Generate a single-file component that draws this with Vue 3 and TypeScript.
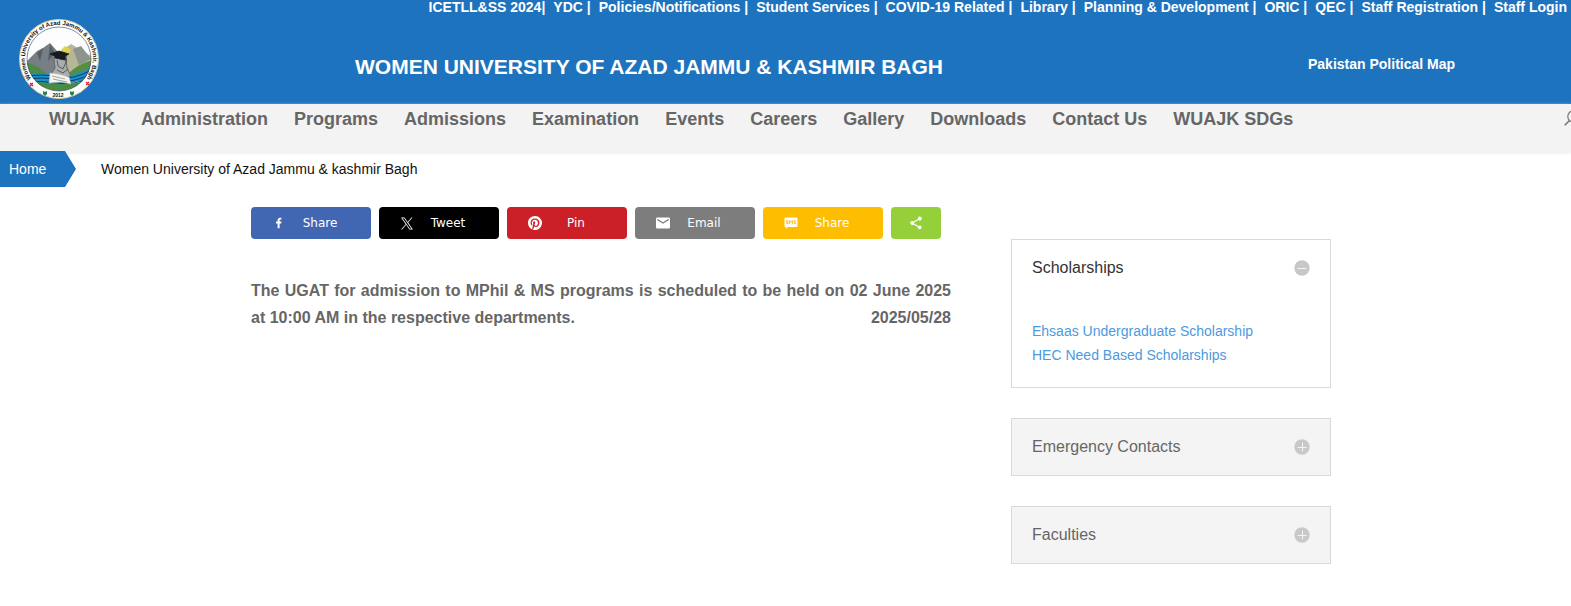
<script setup lang="ts">
import { ref } from 'vue'

const topLinks: string[] = [
  'ICETLL&SS 2024', 'YDC ', 'Policies/Notifications ', 'Student Services ', 'COVID-19 Related ',
  'Library ', 'Planning & Development ', 'ORIC ', 'QEC ', 'Staff Registration ', 'Staff Login',
]
const menu: string[] = [
  'WUAJK', 'Administration', 'Programs', 'Admissions', 'Examination', 'Events',
  'Careers', 'Gallery', 'Downloads', 'Contact Us', 'WUAJK SDGs',
]

interface ShareItem { id: string; label: string }
const shares: ShareItem[] = [
  { id: 'facebook', label: 'Share' },
  { id: 'x', label: 'Tweet' },
  { id: 'pinterest', label: 'Pin' },
  { id: 'email', label: 'Email' },
  { id: 'sms', label: 'Share' },
]

interface Panel { title: string; links: string[] }
const panels: Panel[] = [
  { title: 'Scholarships', links: ['Ehsaas Undergraduate Scholarship', 'HEC Need Based Scholarships'] },
  { title: 'Emergency Contacts', links: [] },
  { title: 'Faculties', links: [] },
]
const openPanel = ref<number>(0)
</script>

<template>
  <div class="page">
    <header class="header">
      <nav class="top-links" aria-label="Quick links">
        <span v-for="(link, i) in topLinks" :key="link" class="top-item"><a href="#">{{ link }}</a><span v-if="i < topLinks.length - 1">|</span></span>
      </nav>
      <div class="brand">
        <a href="#" class="logo" aria-label="University home">
          <svg viewBox="0 0 80 80" width="80" height="80">
            <defs>
              <clipPath id="scene"><circle cx="40" cy="40" r="32" /></clipPath>
              <path id="ring" d="M15.500 63.500 A34 34 0 1 1 64.500 63.500" />
            </defs>
            <circle cx="40" cy="40" r="39.500" fill="#fff" stroke="#d8cda0" stroke-width="1" />
            <g clip-path="url(#scene)">
              <rect width="80" height="80" fill="#fdfdfe" />
              <path d="M42 32 L52 25 L74 38 V58 H36Z" fill="#b5b796" />
              <path d="M42 31 L46 27 L52 31 L49 36Z" fill="#ddd34e" />
              <path d="M54 30 L62 27 L72 40 L60 46Z" fill="#8d948d" />
              <path d="M6 44 L18 32 L24 29 L31 24 L39 33 L46 46 L40 60 H6Z" fill="#777f84" />
              <path d="M18 34 L24 29 L21 42Z M31 25 L36 34 L29 42Z" fill="#545e65" />
              <path d="M6 43 Q20 46 31 58 L29 66 H6Z" fill="#4f8b48" />
              <path d="M74 41 Q59 45 50 54 L53 62 H74Z" fill="#568f43" />
              <path d="M6 56 Q22 53 38 56 T74 47 V61 Q55 62 43 67 T6 63Z" fill="#1a91cb" />
              <path d="M6 58 Q22 54 38 58 T74 50 M6 61 Q22 57 38 61 T74 54 M6 64 Q22 61 38 64 T74 58" fill="none" stroke="#103d64" stroke-width="1" />
              <path d="M4 63 Q21 62 32 65 Q52 66 76 60 V80 H4Z" fill="#498c40" />
              <path d="M35 39 Q40 35 47 39 L48 49 L52 57 L40 59 L32 55 L36 49Z" fill="#a9acae" stroke="#61676b" />
              <path d="M38 41 L39 47 L44 50 L47 43 M38 51 L44 54 L49 50" fill="none" stroke="#555c61" />
              <path d="M31 35 L40 32 L50 35 L46 37 V41 L36 39 V37Z M47 36 V43" fill="#171b20" stroke="#171b20" stroke-width=".8" />
              <path d="M31 54 L39 55 L50 58 L52 65 L42 63 L30 64Z" fill="#f6f5ed" stroke="#b7c0b6" stroke-width=".6" />
              <path d="M33 57 L46 60 M34 60 L48 63" stroke="#7b817d" stroke-width=".7" />
            </g>
            <circle cx="40" cy="40" r="32" fill="none" stroke="#303f64" stroke-width=".6" />
            <text class="seal"><textPath href="#ring" startOffset="50%" text-anchor="middle">Women University of Azad Jammu &amp; Kashmir, Bagh</textPath></text>
            <text x="39" y="78" class="seal year" text-anchor="middle">2012</text>
            <path d="M11 64 l3 3 m0-3 l-3 3 M67 63 l3 3 m0-3 l-3 3" stroke="#d42136" stroke-width="1.200" />
            <path d="M24 72 l2 1 2-1 v3 l-2 2 -2-2z M51 72 l2 1 2-1 v3 l-2 2 -2-2z" fill="#268448" />
          </svg>
        </a>
        <h1>WOMEN UNIVERSITY OF AZAD JAMMU &amp; KASHMIR BAGH</h1>
        <a href="#" class="map-link">Pakistan Political Map</a>
      </div>
    </header>

    <nav class="menu" aria-label="Main menu">
      <a v-for="item in menu" :key="item" href="#">{{ item }}</a>
      <button type="button" class="search" aria-label="Search">
        <svg viewBox="0 0 16 16" width="16" height="16" fill="none" stroke="#777" stroke-width="1.200">
          <circle cx="9.500" cy="6.500" r="5.700" /><path d="M5.500 10.500 L.7 15.300" stroke-width="1.600" />
        </svg>
      </button>
    </nav>

    <nav class="crumbs" aria-label="Breadcrumb">
      <a href="#" class="home">Home</a>
      <span>Women University of Azad Jammu &amp; kashmir Bagh</span>
    </nav>

    <main class="main">
      <article>
        <div class="shares">
          <button v-for="s in shares" :key="s.id" type="button" class="share" :class="s.id">
            <svg v-if="s.id === 'facebook'" viewBox="0 0 40 40" width="16" height="14" fill="#fff"><path d="M21.700 35V21.300h4.600l.7-5.300h-5.300v-3.400c0-1.600.4-2.600 2.700-2.600H27V5.200C26.500 5.100 24.900 5 23 5c-4.100 0-6.900 2.500-6.900 7.100V16h-4.600v5.300h4.600V35z" /></svg>
            <svg v-else-if="s.id === 'x'" viewBox="0 0 24 24" width="16" height="13" fill="#fff"><path d="M14.095 10.316 22.286 1h-1.940L13.230 9.088 7.551 1H1l8.590 12.231L1 23h1.940l7.510-8.543L16.450 23H23l-8.905-12.684zm-2.658 3.022-.872-1.218L3.640 2.432h2.980l5.590 7.821.868 1.219 7.265 10.166h-2.982l-5.926-8.300z" /></svg>
            <svg v-else-if="s.id === 'pinterest'" viewBox="0 0 24 24" width="16" height="14" fill="#fff"><path d="M12 0C5.373 0 0 5.372 0 12c0 5.084 3.163 9.426 7.627 11.174-.105-.949-.2-2.405.042-3.441.218-.937 1.407-5.965 1.407-5.965s-.359-.719-.359-1.782c0-1.668.967-2.914 2.171-2.914 1.023 0 1.518.769 1.518 1.690 0 1.029-.655 2.568-.994 3.995-.283 1.194.599 2.169 1.777 2.169 2.133 0 3.772-2.249 3.772-5.495 0-2.873-2.064-4.882-5.012-4.882-3.414 0-5.418 2.561-5.418 5.207 0 1.031.397 2.138.893 2.738a.36.36 0 0 1 .083.345l-.333 1.360c-.053.220-.174.267-.402.161-1.499-.698-2.436-2.889-2.436-4.649 0-3.785 2.750-7.262 7.929-7.262 4.163 0 7.398 2.967 7.398 6.931 0 4.136-2.607 7.464-6.227 7.464-1.216 0-2.359-.631-2.750-1.378l-.748 2.853c-.271 1.043-1.002 2.350-1.492 3.146A12 12 0 1 0 12 0z" /></svg>
            <svg v-else-if="s.id === 'email'" viewBox="2 2 20 20" width="16" height="14" fill="#fff"><path d="M20 4H4c-1.100 0-2 .9-2 2v12c0 1.100.9 2 2 2h16c1.100 0 2-.9 2-2V6c0-1.100-.9-2-2-2zm0 4-8 5-8-5V6l8 5 8-5z" /></svg>
            <svg v-else viewBox="0 0 14 14" width="16" height="14"><path d="M1.500 1.500h11q1 0 1 1v7.500q0 1-1 1H4l-1.500 1.500L1.500 11q-1 0-1-1V2.500q0-1 1-1z" fill="#fff" /><path d="M4.300 4.700H2.500v1.500h1.600v1.500H2.300M5.600 8.100V4.700L7 6.200l1.400-1.500v3.400M11.700 4.700H10v1.500h1.600v1.500H9.800" fill="none" stroke="#ffbd00" stroke-width=".9" /></svg>
            <span>{{ s.label }}</span>
          </button>
          <button type="button" class="share more" aria-label="More sharing options">
            <svg viewBox="2 1 20 22" width="16" height="14" fill="#fff"><path d="M18 16.100c-.8 0-1.400.3-2 .8l-7.100-4.200c.1-.2.1-.5.1-.7s0-.5-.1-.7L16 7.200A3 3 0 1 0 15 5c0 .2 0 .5.1.7L8 9.800A3 3 0 1 0 8 14.200l7.100 4.200c-.1.200-.1.400-.1.600a2.900 2.900 0 1 0 3-2.900z" /></svg>
          </button>
        </div>
        <p class="notice">The UGAT for admission to MPhil &amp; MS programs is scheduled to be held on 02 June 2025 at 10:00 AM in the respective departments. <time datetime="2025-05-28">2025/05/28</time></p>
      </article>

      <aside class="side">
        <section v-for="(p, i) in panels" :key="p.title" class="panel" :class="{ open: openPanel === i }">
          <button type="button" class="panel-head" :aria-expanded="openPanel === i" @click="openPanel = openPanel === i ? -1 : i">
            <span>{{ p.title }}</span>
            <svg viewBox="0 0 16 16" width="16" height="16"><circle cx="8" cy="8" r="7.700" fill="#c8c8c8" /><path :d="openPanel === i ? 'M3.500 8.500h9' : 'M3.500 8.500h9M8.500 3.500v9'" stroke="#f4f4f4" stroke-width="1" /></svg>
          </button>
          <ul v-if="openPanel === i && p.links.length">
            <li v-for="l in p.links" :key="l"><a href="#">{{ l }}</a></li>
          </ul>
        </section>
      </aside>
    </main>
  </div>
</template>

<style>
body { margin: 0; background: #fff; overflow-x: hidden; }
</style>

<style scoped>
.page { font-family: "Liberation Sans", Arial, sans-serif; font-size: 14px; color: #666; overflow: hidden; }
a { color: inherit; text-decoration: none; }
button { font: inherit; color: inherit; border: 0; padding: 0; margin: 0; background: none; cursor: pointer; }
.header { background: #1e73be; color: #fff; font-weight: 700; height: 104px; }
.top-links { display: flex; justify-content: flex-end; gap: 8px; padding-right: 4px; line-height: 14px; white-space: pre; }
.brand { display: grid; grid-template-columns: 355px 1fr 263px; align-items: center; height: 80px; margin-top: 5px; }
.logo { display: block; height: 80px; padding-left: 19px; }
.seal { font-size: 6px; font-weight: 700; fill: #111; }
.year { font-size: 5px; }
h1 { margin: 0; padding-top: 16px; font-size: 21px; line-height: 24px; }
.map-link { padding-top: 10px; }
.menu { display: flex; gap: 26px; height: 48px; padding-left: 49px; background: #f3f3f3; box-shadow: 0 1px 3px #e8e8e8; font-size: 18px; font-weight: 700; line-height: 30px; white-space: nowrap; }
.search { margin-left: auto; margin-right: -9px; padding-top: 6px; height: 22px; line-height: 0; }
.crumbs { position: relative; display: flex; align-items: center; gap: 25px; margin-top: -1px; height: 36px; color: #111; }
.home { box-sizing: border-box; width: 76px; padding-left: 9px; line-height: 36px; background: #1e73be; color: #fff; clip-path: polygon(0 0, 65px 0, 100% 50%, 65px 100%, 0 100%); }
.main { box-sizing: border-box; max-width: 1091px; margin: 20px auto 0; padding-left: 11px; display: grid; grid-template-columns: 1fr 320px; gap: 60px; }
.shares { display: flex; gap: 8px; }
.share { box-sizing: border-box; display: flex; align-items: center; width: 120px; height: 32px; padding: 0 18px 0 20px; border-radius: 4px; color: #fff; font-family: "DejaVu Sans", Verdana, sans-serif; font-size: 12px; }
.share svg { flex: none; }
.share span { flex: 1; text-align: center; }
.facebook { background: #4267b2; }
.x { background: #000; }
.pinterest { background: #cb2027; }
.email { background: #7d7d7d; }
.sms { background: #ffbd00; }
.more { width: 50px; padding: 0; justify-content: center; background: #95d03a; }
.notice { margin: 38px 0 0; font-size: 16px; font-weight: 700; line-height: 27px; text-align: justify; }
.notice time { float: right; }
.side { display: flex; flex-direction: column; gap: 30px; padding-top: 32px; }
.panel { border: 1px solid #d9d9d9; padding: 20px; background: #f4f4f4; }
.panel.open { background: #fff; color: #333; }
.panel-head { display: flex; width: 100%; align-items: center; justify-content: space-between; font-size: 16px; line-height: 16px; }
ul { list-style: none; margin: 43px 0 0; padding: 0; line-height: 24px; color: #4b9ae0; }
</style>
